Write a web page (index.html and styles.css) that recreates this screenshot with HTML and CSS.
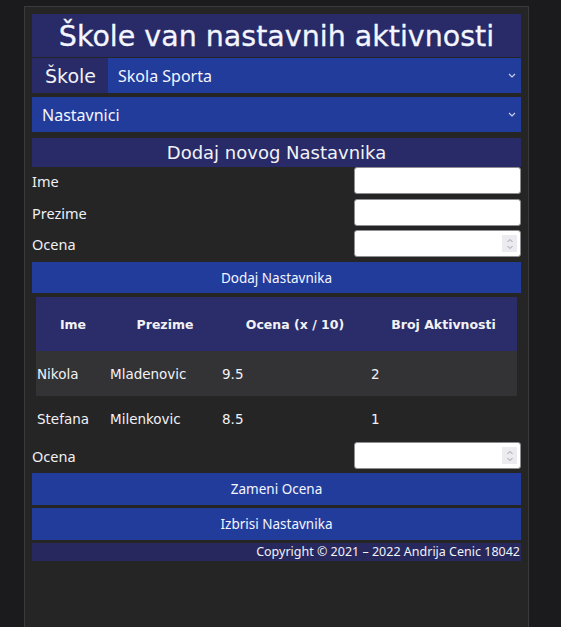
FILE: index.html
```html
<!DOCTYPE html>
<html lang="sr">
<head>
<meta charset="utf-8">
<title>Škole</title>
<link rel="stylesheet" href="styles.css">
</head>
<body>
<div class="panel">
  <h1 class="title">Škole van nastavnih aktivnosti</h1>
  <div class="school-row">
    <span class="school-label">Škole</span>
    <div class="select-wrap">
      <select class="select"><option>Skola Sporta</option></select>
      <svg class="chev" width="8" height="5" viewBox="0 0 8 5"><path d="M1 1l3 3 3-3" fill="none" stroke="#c9cff0" stroke-width="1.2"/></svg>
    </div>
  </div>
  <div class="select-wrap gap4">
    <select class="select"><option>Nastavnici</option></select>
    <svg class="chev" width="8" height="5" viewBox="0 0 8 5"><path d="M1 1l3 3 3-3" fill="none" stroke="#c9cff0" stroke-width="1.2"/></svg>
  </div>
  <h2 class="section">Dodaj novog Nastavnika</h2>
  <div class="field"><label class="label">Ime</label><input class="input" type="text"></div>
  <div class="field f5"><label class="label">Prezime</label><input class="input" type="text"></div>
  <div class="field f4"><label class="label">Ocena</label>
    <div class="num-wrap"><input class="input" type="text"><span class="spin"><svg width="8" height="14" viewBox="0 0 8 14"><path d="M1.5 5l2.5-2.5 2.5 2.5M1.5 9l2.5 2.5 2.5-2.5" fill="none" stroke="#9a9aa2" stroke-width="1"/></svg></span></div>
  </div>
  <button class="btn b-add">Dodaj Nastavnika</button>
  <table class="table">
    <thead>
      <tr><th class="c1">Ime</th><th class="c2">Prezime</th><th class="c3">Ocena (x / 10)</th><th class="c4">Broj Aktivnosti</th></tr>
    </thead>
    <tbody>
      <tr class="odd"><td>Nikola</td><td>Mladenovic</td><td>9.5</td><td>2</td></tr>
      <tr><td>Stefana</td><td>Milenkovic</td><td>8.5</td><td>1</td></tr>
    </tbody>
  </table>
  <div class="field f1"><label class="label">Ocena</label>
    <div class="num-wrap"><input class="input" type="text"><span class="spin"><svg width="8" height="14" viewBox="0 0 8 14"><path d="M1.5 5l2.5-2.5 2.5 2.5M1.5 9l2.5 2.5 2.5-2.5" fill="none" stroke="#9a9aa2" stroke-width="1"/></svg></span></div>
  </div>
  <button class="btn b-swap">Zameni Ocena</button>
  <button class="btn b-del">Izbrisi Nastavnika</button>
  <footer class="footer">Copyright © 2021 – 2022 Andrija Cenic 18042</footer>
</div>
</body>
</html>
```
FILE: styles.css
```css
* { box-sizing: border-box; }
html, body { margin: 0; padding: 0; }
body {
  background: #1b1b1d;
  font-family: "Noto Sans", "DejaVu Sans", sans-serif;
  color: #f2f2f6;
  height: 627px;
  overflow: hidden;
}
.panel {
  margin: 6px 0 0 24px;
  width: 505px;
  min-height: 640px;
  background: #252526;
  border: 1px solid #3a3a3c;
  padding: 7px 7px;
  display: flex;
  flex-direction: column;
}
.title {
  margin: 0;
  height: 43px;
  background: #282b68;
  color: #f4f6ff;
  font-family: "DejaVu Sans", sans-serif;
  font-weight: 500;
  font-size: 28.5px;
  line-height: 45px;
  text-align: center;
  -webkit-text-stroke: 0.3px #f4f6ff;
}
.school-row {
  display: flex;
  margin-top: 1px;
  height: 35px;
}
.school-label {
  width: 76px;
  background: #282b68;
  font-family: "DejaVu Sans", sans-serif;
  font-size: 19px;
  line-height: 36px;
  padding-left: 13px;
}
.select-wrap { position: relative; flex: 1; height: 35px; display: flex; }
.gap4 { margin-top: 4px; flex: none; }
.select {
  appearance: none;
  -webkit-appearance: none;
  width: 100%;
  height: 35px;
  border: none;
  border-radius: 0;
  background: #223c9c;
  color: #f4f6ff;
  font-family: "Noto Sans", sans-serif;
  font-size: 16px;
  padding: 0 10px;
  outline: none;
}
.chev { position: absolute; right: 5px; top: 15px; }
.section {
  margin: 6px 0 0;
  height: 29px;
  background: #282b68;
  font-family: "DejaVu Sans", sans-serif;
  font-weight: normal;
  font-size: 18px;
  line-height: 29px;
  text-align: center;
}
.field {
  display: flex;
  justify-content: space-between;
  align-items: center;
  height: 27px;
}
.f5 { margin-top: 5px; }
.f4 { margin-top: 4px; }
.f1 { margin-top: 1px; }
.label { font-size: 14.5px; color: #f0f0f4; }
.input {
  width: 167px;
  height: 27px;
  background: #fff;
  border: 1px solid #8d8d92;
  border-radius: 3px;
  outline: none;
}
.num-wrap { position: relative; width: 167px; height: 27px; }
.spin {
  position: absolute;
  right: 4px;
  top: 5px;
  width: 15px;
  height: 17px;
  background: #ececf0;
  display: flex;
  align-items: center;
  justify-content: center;
}
.btn {
  display: block;
  width: 100%;
  border: none;
  background: #223c9c;
  color: #f4f6ff;
  font-family: "Noto Sans", sans-serif;
  font-size: 13.5px;
  padding: 0;
  text-align: center;
}
.b-add { margin-top: 5px; height: 31px; }
.b-swap { margin-top: 4px; height: 32px; }
.b-del { margin-top: 3px; height: 32px; }
.table {
  margin: 4px 4px 0;
  width: 481px;
  border-collapse: collapse;
  font-family: "DejaVu Sans", sans-serif;
  font-size: 13.5px;
}
.table th {
  height: 54px;
  background: #2a2d69;
  font-size: 12.5px;
  font-weight: bold;
  text-align: center;
  padding: 0;
}
.c1 { width: 74px; }
.c2 { width: 110px; }
.c3 { width: 150px; }
.c4 { width: 147px; }
.table td { height: 45px; padding: 0 1px; text-align: left; }
.table td:nth-child(2) { padding-left: 0; }
.table td:nth-child(3) { padding-left: 2px; }
.odd td { background: #333335; }
.footer {
  margin-top: 3px;
  height: 18px;
  background: #26285e;
  font-size: 12.5px;
  line-height: 18px;
  text-align: right;
  padding-right: 1px;
}
```
